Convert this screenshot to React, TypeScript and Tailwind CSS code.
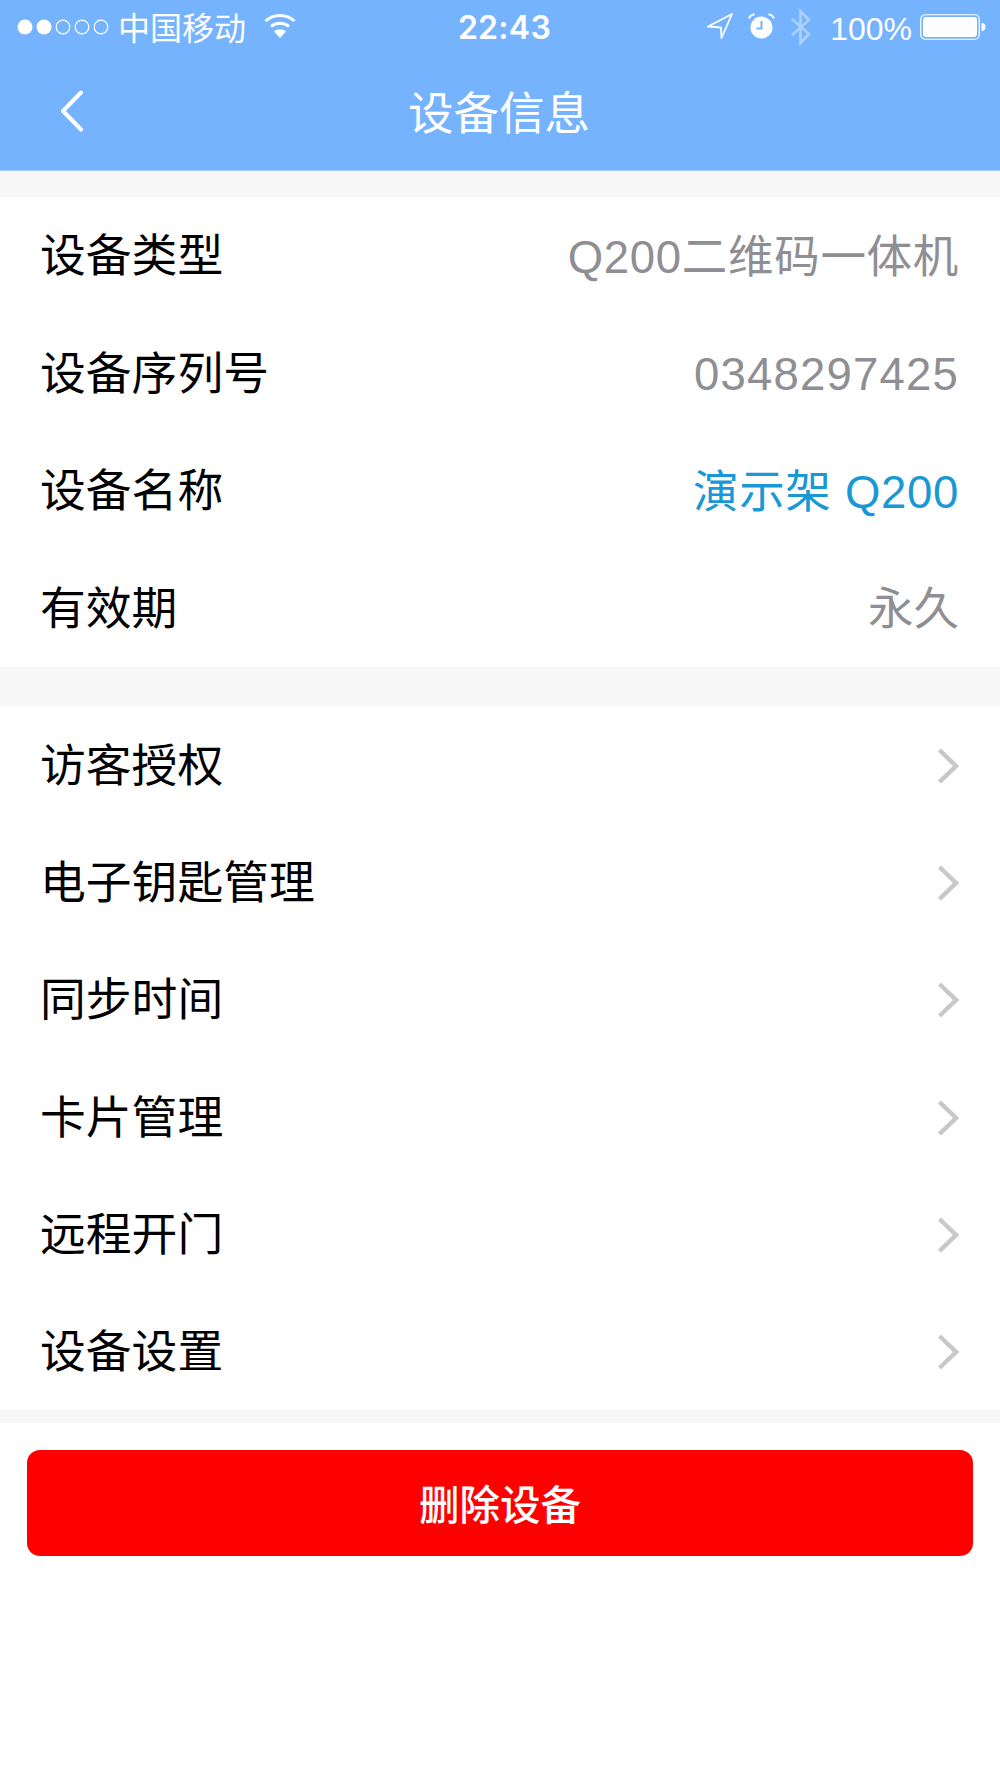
import React from "react";

const FONT = "font-['Liberation_Sans','Noto_Sans_CJK_SC',sans-serif]";

const infoRows: { label: string; value: string; tone: string }[] = [
  { label: "设备类型", value: "Q200二维码一体机", tone: "text-[#8e8e93] tracking-[0.7px]" },
  { label: "设备序列号", value: "0348297425", tone: "text-[#8e8e93] tracking-[1.2px]" },
  { label: "设备名称", value: "演示架 Q200", tone: "text-[#1a98d5] tracking-[0.7px]" },
  { label: "有效期", value: "永久", tone: "text-[#8e8e93]" },
];

const menuRows = ["访客授权", "电子钥匙管理", "同步时间", "卡片管理", "远程开门", "设备设置"];

function SignalDots() {
  return (
    <svg width="92" height="20" viewBox="0 0 92 20" fill="none">
      <circle cx="8" cy="10" r="7.5" fill="#fff" />
      <circle cx="27" cy="10" r="7.5" fill="#fff" />
      <circle cx="46" cy="10" r="6.8" stroke="#fff" strokeWidth="1.2" />
      <circle cx="65" cy="10" r="6.8" stroke="#fff" strokeWidth="1.2" />
      <circle cx="84" cy="10" r="6.8" stroke="#fff" strokeWidth="1.2" />
    </svg>
  );
}

function Wifi() {
  return (
    <svg width="32" height="26" viewBox="0 0 32 26" fill="none">
      <path d="M1.5 8C9.5 0.5 22.5 0.5 30.5 8" stroke="#fff" strokeWidth="3" />
      <path d="M7 13.5C12 9 20 9 25 13.5" stroke="#fff" strokeWidth="3" />
      <path d="M16 25L10 18.5C13 15.5 19 15.5 22 18.5Z" fill="#fff" />
    </svg>
  );
}

function LocationArrow() {
  return (
    <svg width="28" height="28" viewBox="0 0 28 28" fill="none">
      <path d="M26 2L2 14.5L15 15.5L15.5 26Z" stroke="#fff" strokeWidth="1.8" strokeLinejoin="round" />
    </svg>
  );
}

function Alarm() {
  return (
    <svg width="27" height="26" viewBox="0 0 27 26" fill="none">
      <circle cx="13.5" cy="14.5" r="11" fill="#fff" />
      <path d="M13.5 8V15.5H8.5" stroke="#76b3ff" strokeWidth="2" />
      <path d="M1 5.5C2 3 4 1.5 6.5 1.5" stroke="#fff" strokeWidth="2" />
      <path d="M26 5.5C25 3 23 1.5 20.5 1.5" stroke="#fff" strokeWidth="2" />
    </svg>
  );
}

function Bluetooth() {
  return (
    <svg width="22" height="36" viewBox="0 0 22 36" fill="none" className="opacity-40">
      <path d="M2 10L19 25L10.5 34V2L19 11L2 26" stroke="#fff" strokeWidth="2.6" />
    </svg>
  );
}

function Battery() {
  return (
    <svg width="66" height="26" viewBox="0 0 66 26" fill="none">
      <rect x="0.75" y="0.75" width="58.5" height="24.5" rx="4.5" stroke="#fff" strokeWidth="1.2" />
      <rect x="3" y="3" width="54" height="20" rx="3" fill="#fff" />
      <path d="M61.5 9C64 9 65.5 10.5 65.5 13C65.5 15.5 64 17 61.5 17Z" fill="#fff" />
    </svg>
  );
}

function Chevron() {
  return (
    <svg width="22" height="36" viewBox="0 0 22 36" fill="none">
      <path d="M2.5 2L19 18L2.5 34" stroke="#c7c7cc" strokeWidth="4.5" />
    </svg>
  );
}

function BackArrow() {
  return (
    <svg width="24" height="42" viewBox="0 0 24 42" fill="none">
      <path d="M21 2.5L3 21L21 39.5" stroke="#fff" strokeWidth="4" strokeLinecap="round" strokeLinejoin="round" />
    </svg>
  );
}

export default function App() {
  return (
    <div className={`${FONT} flex h-[1778px] w-[1000px] flex-col bg-white text-black`}>
      <header className="h-[171px] border-b border-[#a3ccfb] bg-[#76b3ff] text-white">
        <div className="flex h-[54px] items-center justify-between pl-[17px] pr-[14px]">
          <div className="flex w-[300px] items-center">
            <SignalDots />
            <span className="ml-[9px] mt-[3px] text-[32px] leading-none">中国移动</span>
            <span className="ml-[18px] -mt-[3px]"><Wifi /></span>
          </div>
          <span className="ml-[6px] mt-[1px] font-['Inter',sans-serif] text-[32px] font-semibold leading-none tracking-[0.3px]">22:43</span>
          <div className="flex w-[300px] items-center justify-end">
            <span className="mt-[-2px]"><LocationArrow /></span>
            <span className="ml-[14px] mt-[-2px]"><Alarm /></span>
            <span className="ml-[15px]"><Bluetooth /></span>
            <span className="ml-[18px] mt-[3px] text-[32px] leading-none">100%</span>
            <span className="ml-[8px]"><Battery /></span>
          </div>
        </div>
        <div className="flex h-[114px] items-center pl-[60px]">
          <BackArrow />
          <h1 className="ml-[324px] mt-[7px] text-[45.5px] font-normal leading-none">设备信息</h1>
        </div>
      </header>

      <div className="h-[26px] bg-[#f7f7f7]" />

      <section>
        {infoRows.map((row) => (
          <div key={row.label} className="flex h-[117.5px] items-center justify-between pl-[40px] pr-[41px] pt-[2px]">
            <span className="mt-[1px] text-[45.8px] leading-none">{row.label}</span>
            <span className={`mt-[1px] text-[45.5px] leading-none ${row.tone}`}>{row.value}</span>
          </div>
        ))}
      </section>

      <div className="h-[39px] bg-[#f7f7f7]" />

      <section>
        {menuRows.map((label) => (
          <div key={label} className="flex h-[117.33px] items-center justify-between pl-[40px] pr-[41px]">
            <span className="mt-[4px] text-[45.8px] leading-none">{label}</span>
            <span className="mt-[2px]"><Chevron /></span>
          </div>
        ))}
      </section>

      <div className="h-[13px] bg-[#f7f7f7]" />

      <div className="px-[27px] pt-[27px]">
        <button className="flex h-[106px] w-full items-center justify-center rounded-[13px] bg-[#ff0000] font-['Noto_Sans_CJK_SC',sans-serif] text-[40.5px] font-medium text-white">
          删除设备
        </button>
      </div>
    </div>
  );
}
